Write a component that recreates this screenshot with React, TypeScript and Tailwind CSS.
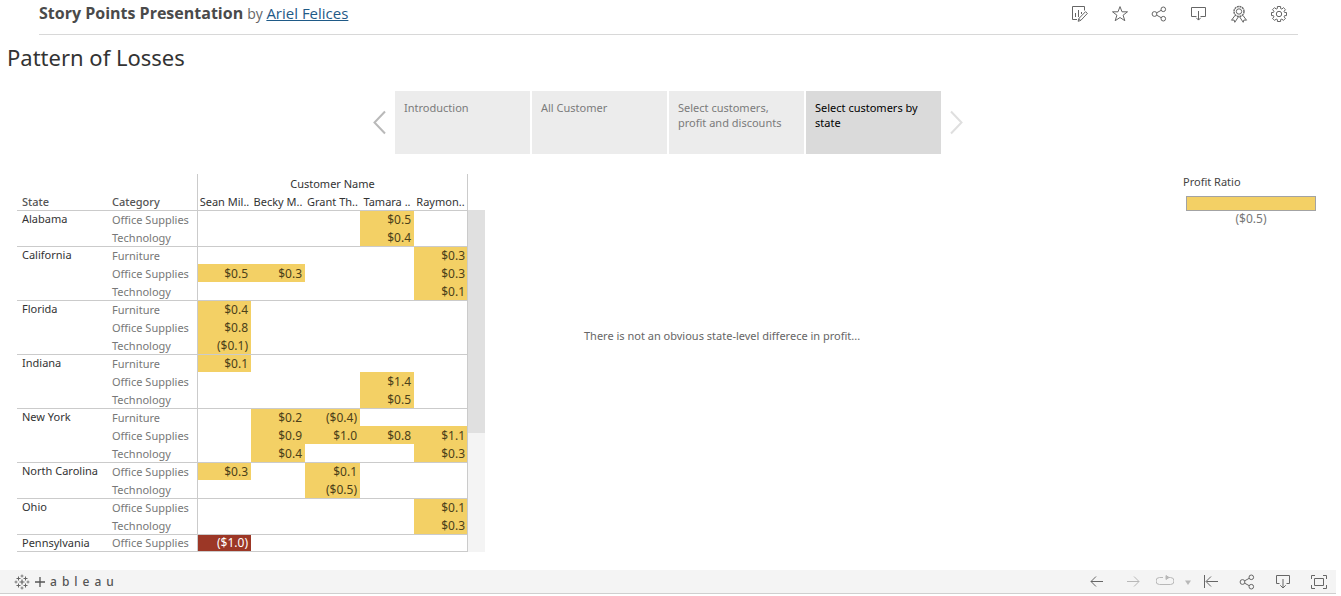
import type { ReactNode } from "react";

type Row = { category: string; values: (string | null)[] };
type Group = { state: string; rows: Row[] };

const customers = ["Sean Mil..", "Becky M..", "Grant Th..", "Tamara ..", "Raymon.."];

const OS = "Office Supplies";
const TE = "Technology";
const FU = "Furniture";

const groups: Group[] = [
  {
    state: "Alabama",
    rows: [
      { category: OS, values: [null, null, null, "$0.5", null] },
      { category: TE, values: [null, null, null, "$0.4", null] },
    ],
  },
  {
    state: "California",
    rows: [
      { category: FU, values: [null, null, null, null, "$0.3"] },
      { category: OS, values: ["$0.5", "$0.3", null, null, "$0.3"] },
      { category: TE, values: [null, null, null, null, "$0.1"] },
    ],
  },
  {
    state: "Florida",
    rows: [
      { category: FU, values: ["$0.4", null, null, null, null] },
      { category: OS, values: ["$0.8", null, null, null, null] },
      { category: TE, values: ["($0.1)", null, null, null, null] },
    ],
  },
  {
    state: "Indiana",
    rows: [
      { category: FU, values: ["$0.1", null, null, null, null] },
      { category: OS, values: [null, null, null, "$1.4", null] },
      { category: TE, values: [null, null, null, "$0.5", null] },
    ],
  },
  {
    state: "New York",
    rows: [
      { category: FU, values: [null, "$0.2", "($0.4)", null, null] },
      { category: OS, values: [null, "$0.9", "$1.0", "$0.8", "$1.1"] },
      { category: TE, values: [null, "$0.4", null, null, "$0.3"] },
    ],
  },
  {
    state: "North Carolina",
    rows: [
      { category: OS, values: ["$0.3", null, "$0.1", null, null] },
      { category: TE, values: [null, null, "($0.5)", null, null] },
    ],
  },
  {
    state: "Ohio",
    rows: [
      { category: OS, values: [null, null, null, null, "$0.1"] },
      { category: TE, values: [null, null, null, null, "$0.3"] },
    ],
  },
  {
    state: "Pennsylvania",
    rows: [{ category: OS, values: ["($1.0)", null, null, null, null] }],
  },
];

const points = [
  "Introduction",
  "All Customer",
  "Select customers, profit and discounts",
  "Select customers by state",
];

function Icon({ children }: { children: ReactNode }) {
  return (
    <svg viewBox="0 0 18 18" className="size-[18px] fill-none stroke-current" strokeWidth="1" aria-hidden="true">
      {children}
    </svg>
  );
}

function EditIcon() {
  return (
    <Icon>
      <path d="M7 14.500H2.500v-13h12v4" />
      <path d="M5.500 8v4M8.500 5v7M11.500 7v2" />
      <path d="M15.500 6.700l1.900 1.700-6.600 7-2.600.9.600-2.700zM9 13.700l1.700 1.600" />
    </Icon>
  );
}

function StarIcon() {
  return (
    <Icon>
      <path d="M10 1.600l2 5.200h5.500l-4.400 3.400 1.700 5.500-4.800-3.200-4.800 3.200 1.700-5.500L2.500 6.800H8z" />
    </Icon>
  );
}

function ShareIcon() {
  return (
    <Icon>
      <circle cx="4.500" cy="9" r="2.400" />
      <circle cx="13.300" cy="4.300" r="2.300" />
      <circle cx="13.300" cy="13.700" r="2.300" />
      <path d="M6.700 7.800l4.500-2.500M6.700 10.200l4.500 2.500" />
    </Icon>
  );
}

function DownloadIcon() {
  return (
    <Icon>
      <path d="M6.500 11.500h-5v-9h14v9h-5" />
      <path d="M8.500 6v9M6.300 12.800l2.200 2.300 2.200-2.300" />
    </Icon>
  );
}

function AwardIcon() {
  return (
    <Icon>
      <circle cx="9" cy="6.500" r="5" strokeWidth="1.400" strokeDasharray="2 .6" />
      <circle cx="9" cy="6.500" r="2.700" />
      <path d="M5 10.500l-3.500 4.700 2.600-.2.700 2.300 3.600-5.500M13 10.500l3.500 4.700-2.600-.2-.7 2.300-3.600-5.500" />
    </Icon>
  );
}

function GearIcon() {
  return (
    <Icon>
      <circle cx="9" cy="9" r="2.700" />
      <path d="M7.400 1.500h3.200v2l1.300.6 1.500-1.500 2.100 2.100L14 6.200l.6 1.300h1.900v3.100h-1.900l-.6 1.300 1.500 1.400-2.200 2.200-1.400-1.500-1.300.6v1.900H7.400v-1.900l-1.300-.6-1.400 1.500-2.200-2.200L4 11.900l-.6-1.300H1.500V7.500h1.900L4 6.200 2.500 4.700l2.100-2.100 1.500 1.500 1.300-.6z" />
    </Icon>
  );
}

function TableauMark() {
  return (
    <svg viewBox="0 0 16 16" className="size-4 fill-none stroke-[#666]" strokeWidth="1" aria-hidden="true">
      <path d="M8 5.500v5M5.500 8h5" strokeWidth="1.200" />
      <path d="M4.500 2.500v4M2.500 4.500h4M11.500 2.500v4M9.500 4.500h4M4.500 9.500v4M2.500 11.500h4M11.500 9.500v4M9.500 11.500h4" />
      <path d="M8 .5v3M6.500 2h3M8 12.500v3M6.500 14h3M2 6.500v3M.5 8h3M14 6.500v3M12.500 8h3" strokeWidth=".8" />
    </svg>
  );
}

function IconButton({ label, disabled, children }: { label: string; disabled?: boolean; children: ReactNode }) {
  return (
    <button
      type="button"
      aria-label={label}
      disabled={disabled}
      className="flex text-[#666] disabled:text-[#b8b8b8]"
    >
      {children}
    </button>
  );
}

function Header() {
  return (
    <header className="ml-[39px] mr-[38px] flex h-[35px] items-start justify-between border-b border-[#d8d8d8] font-['Open_Sans','Noto_Sans',sans-serif]">
      <div className="flex items-baseline gap-1 pt-px leading-6">
        <h1 className="text-[16px] font-bold text-[#4a4a4a]">Story Points Presentation</h1>
        <p className="text-[14px] text-[#666]">
          by{" "}
          <a href="#author" className="text-[15px] text-[#1f5a87] underline">
            Ariel Felices
          </a>
        </p>
      </div>
      <div className="flex gap-[22px] pr-[10px] pt-[5px]">
        <IconButton label="Edit"><EditIcon /></IconButton>
        <IconButton label="Favorite"><StarIcon /></IconButton>
        <IconButton label="Share"><ShareIcon /></IconButton>
        <IconButton label="Download"><DownloadIcon /></IconButton>
        <IconButton label="Nominate"><AwardIcon /></IconButton>
        <IconButton label="Settings"><GearIcon /></IconButton>
      </div>
    </header>
  );
}

function StoryNav() {
  return (
    <nav aria-label="Story points" className="flex items-center justify-center gap-[9px]">
      <button type="button" aria-label="Previous" className="text-[#b9b9b9]">
        <svg viewBox="0 0 13 26" className="h-[26px] w-[13px] fill-none stroke-current" strokeWidth="2">
          <path d="M12 1.500L1.500 12.500 12 23.500" />
        </svg>
      </button>
      <div className="flex gap-[2px]">
        {points.map((point, i) => (
          <button
            key={point}
            type="button"
            aria-current={i === 3 ? "step" : undefined}
            className="flex h-[63px] w-[135px] items-start bg-[#ececec] px-[9px] pt-[9px] text-left text-[11px] leading-[15px] text-[#7b7b7b] aria-[current=step]:bg-[#dadada] aria-[current=step]:text-black"
          >
            {point}
          </button>
        ))}
      </div>
      <button type="button" aria-label="Next" className="text-[#dfdfdf]" disabled>
        <svg viewBox="0 0 13 26" className="h-[26px] w-[13px] fill-none stroke-current" strokeWidth="2">
          <path d="M1 1.500l10.500 11L1 23.500" />
        </svg>
      </button>
    </nav>
  );
}

function tone(value: string | null) {
  if (value === null) return "";
  return value === "($1.0)" ? "bg-[#9c3726] text-white" : "bg-[#f3d065] text-[#4b4019]";
}

function ProfitTable() {
  return (
    <div className="flex shrink-0">
      <table className="w-[451px] table-fixed border-separate border-spacing-0 border-b border-[#cbcbcb] text-[11px] leading-[17px]">
        <colgroup>
          <col className="w-[90px]" />
          <col className="w-[90px]" />
          <col className="w-[54px]" />
          <col className="w-[54px]" />
          <col className="w-[55px]" />
          <col className="w-[54px]" />
          <col className="w-[54px]" />
        </colgroup>
        <thead className="text-[#333]">
          <tr className="h-[18px]">
            <td colSpan={2} className="p-0" />
            <th colSpan={5} scope="colgroup" className="border-x border-[#cbcbcb] p-0 pt-px text-center font-normal">
              Customer Name
            </th>
          </tr>
          <tr className="h-[18px]">
            <th scope="col" className="p-0 pl-[5px] pt-px text-left font-medium text-[#555]">State</th>
            <th scope="col" className="p-0 pl-[5px] pt-px text-left font-medium text-[#555]">Category</th>
            {customers.map((name) => (
              <th
                key={name}
                scope="col"
                className="whitespace-nowrap border-[#cbcbcb] p-0 pt-px text-center font-normal nth-3:border-l last:border-r"
              >
                {name}
              </th>
            ))}
          </tr>
        </thead>
        {groups.map((group) => (
          <tbody key={group.state} className="last:leading-[16px]">
            {group.rows.map((row, r) => {
              const line = r === 0 ? "border-t" : "pt-px";
              return (
                <tr key={row.category}>
                  {r === 0 && (
                    <th
                      scope="rowgroup"
                      rowSpan={group.rows.length}
                      className="whitespace-nowrap border-t border-[#cbcbcb] p-0 pl-[5px] text-left align-top font-normal leading-[16px] text-[#333]"
                    >
                      {group.state}
                    </th>
                  )}
                  <th
                    scope="row"
                    className={`${line} whitespace-nowrap border-[#cbcbcb] pb-0 pl-[5px] pr-0 text-left font-normal text-[#777]`}
                  >
                    {row.category}
                  </th>
                  {row.values.map((value, c) => (
                    <td
                      key={customers[c]}
                      className={`${line} ${c === 0 ? "border-l" : ""} ${c === 4 ? "border-r pr-[2px]" : "pr-[3px]"} border-[#cbcbcb] pb-0 pl-0 text-right text-[12px] ${tone(value)}`}
                    >
                      {value}
                    </td>
                  ))}
                </tr>
              );
            })}
          </tbody>
        ))}
      </table>
      <div className="mt-9 w-[17px] bg-[#f4f4f4]">
        <div className="h-[223px] bg-[#e0e0e0]" />
      </div>
    </div>
  );
}

function Legend() {
  return (
    <aside className="w-[133px] shrink-0 text-[11px] leading-[15px] text-[#444]">
      <h3>Profit Ratio</h3>
      <div className="ml-[3px]">
        <div className="mt-[7px] h-[15px] border border-[#a3a3a3] bg-[#f3d065]" />
        <p className="text-center text-[12px] leading-[15px] text-[#777]">($0.5)</p>
      </div>
    </aside>
  );
}

function Footer() {
  return (
    <footer className="flex h-6 items-center justify-between border-b border-[#cfcfcf] bg-[#f4f4f4] pl-[14px] pr-2">
      <a href="#tableau" aria-label="tableau" className="flex items-center gap-[5px] text-[12px] font-medium leading-4 text-[#555]">
        <TableauMark />
        <span className="flex items-center gap-[5px]">
          <svg viewBox="0 0 10 10" className="size-[10px] stroke-current" strokeWidth="1.300" aria-hidden="true">
            <path d="M5 0v10M0 5h10" />
          </svg>
          <span>a</span>
          <span>b</span>
          <span>l</span>
          <span>e</span>
          <span>a</span>
          <span>u</span>
        </span>
      </a>
      <div className="flex items-center gap-[18px]">
        <IconButton label="Undo">
          <Icon><path d="M15 8.500H3M8 3.500l-5 5 5 5" /></Icon>
        </IconButton>
        <div className="flex gap-[14px]">
          <IconButton label="Redo" disabled>
            <Icon><path d="M3 8.500h12M10 3.500l5 5-5 5" /></Icon>
          </IconButton>
          <div className="flex gap-[5px]">
            <IconButton label="Replay" disabled>
              <Icon>
                <path d="M7 4.500H3.500a2.500 2.500 0 000 7h11a2.500 2.500 0 000-7H10" />
                <path d="M10 2.500l3 2-3 2z" className="fill-current" />
              </Icon>
            </IconButton>
            <IconButton label="Replay options" disabled>
              <svg viewBox="0 0 18 18" className="size-[18px] fill-current" aria-hidden="true">
                <path d="M6 7.500h6l-3 4.500z" />
              </svg>
            </IconButton>
            <IconButton label="Revert">
              <Icon><path d="M2.500 2v13M16 8.500H4.500M9 3.500l-5 5 5 5" /></Icon>
            </IconButton>
          </div>
        </div>
        <IconButton label="Share view"><ShareIcon /></IconButton>
        <IconButton label="Download view">
          <Icon>
            <path d="M5.500 10.500h-3v-8h13v8h-3M9 6v9M6.300 12.300L9 15l2.700-2.700" />
          </Icon>
        </IconButton>
        <IconButton label="Full screen">
          <Icon>
            <path d="M4.500 5.500h9v7h-9zM1.500 6V2.500H5M13 2.500h3.500V6M16.500 12v3.500H13M5 15.500H1.500V12" />
          </Icon>
        </IconButton>
      </div>
    </footer>
  );
}

export default function App() {
  return (
    <div className="bg-white pr-[5px] font-['Noto_Sans','Open_Sans',sans-serif]">
      <Header />
      <main className="pb-[18px]">
        <h2 className="mb-[18px] pl-[7px] pt-[6px] text-[22px] leading-8 text-[#333]">Pattern of Losses</h2>
        <StoryNav />
        <section className="flex items-start pl-[17px] pr-5 pt-5">
          <ProfitTable />
          <p className="grow self-center pb-[55px] pl-[99px] text-[11px] leading-[15px] text-[#666]">
            There is not an obvious state-level differece in profit...
          </p>
          <Legend />
        </section>
      </main>
      <Footer />
    </div>
  );
}
